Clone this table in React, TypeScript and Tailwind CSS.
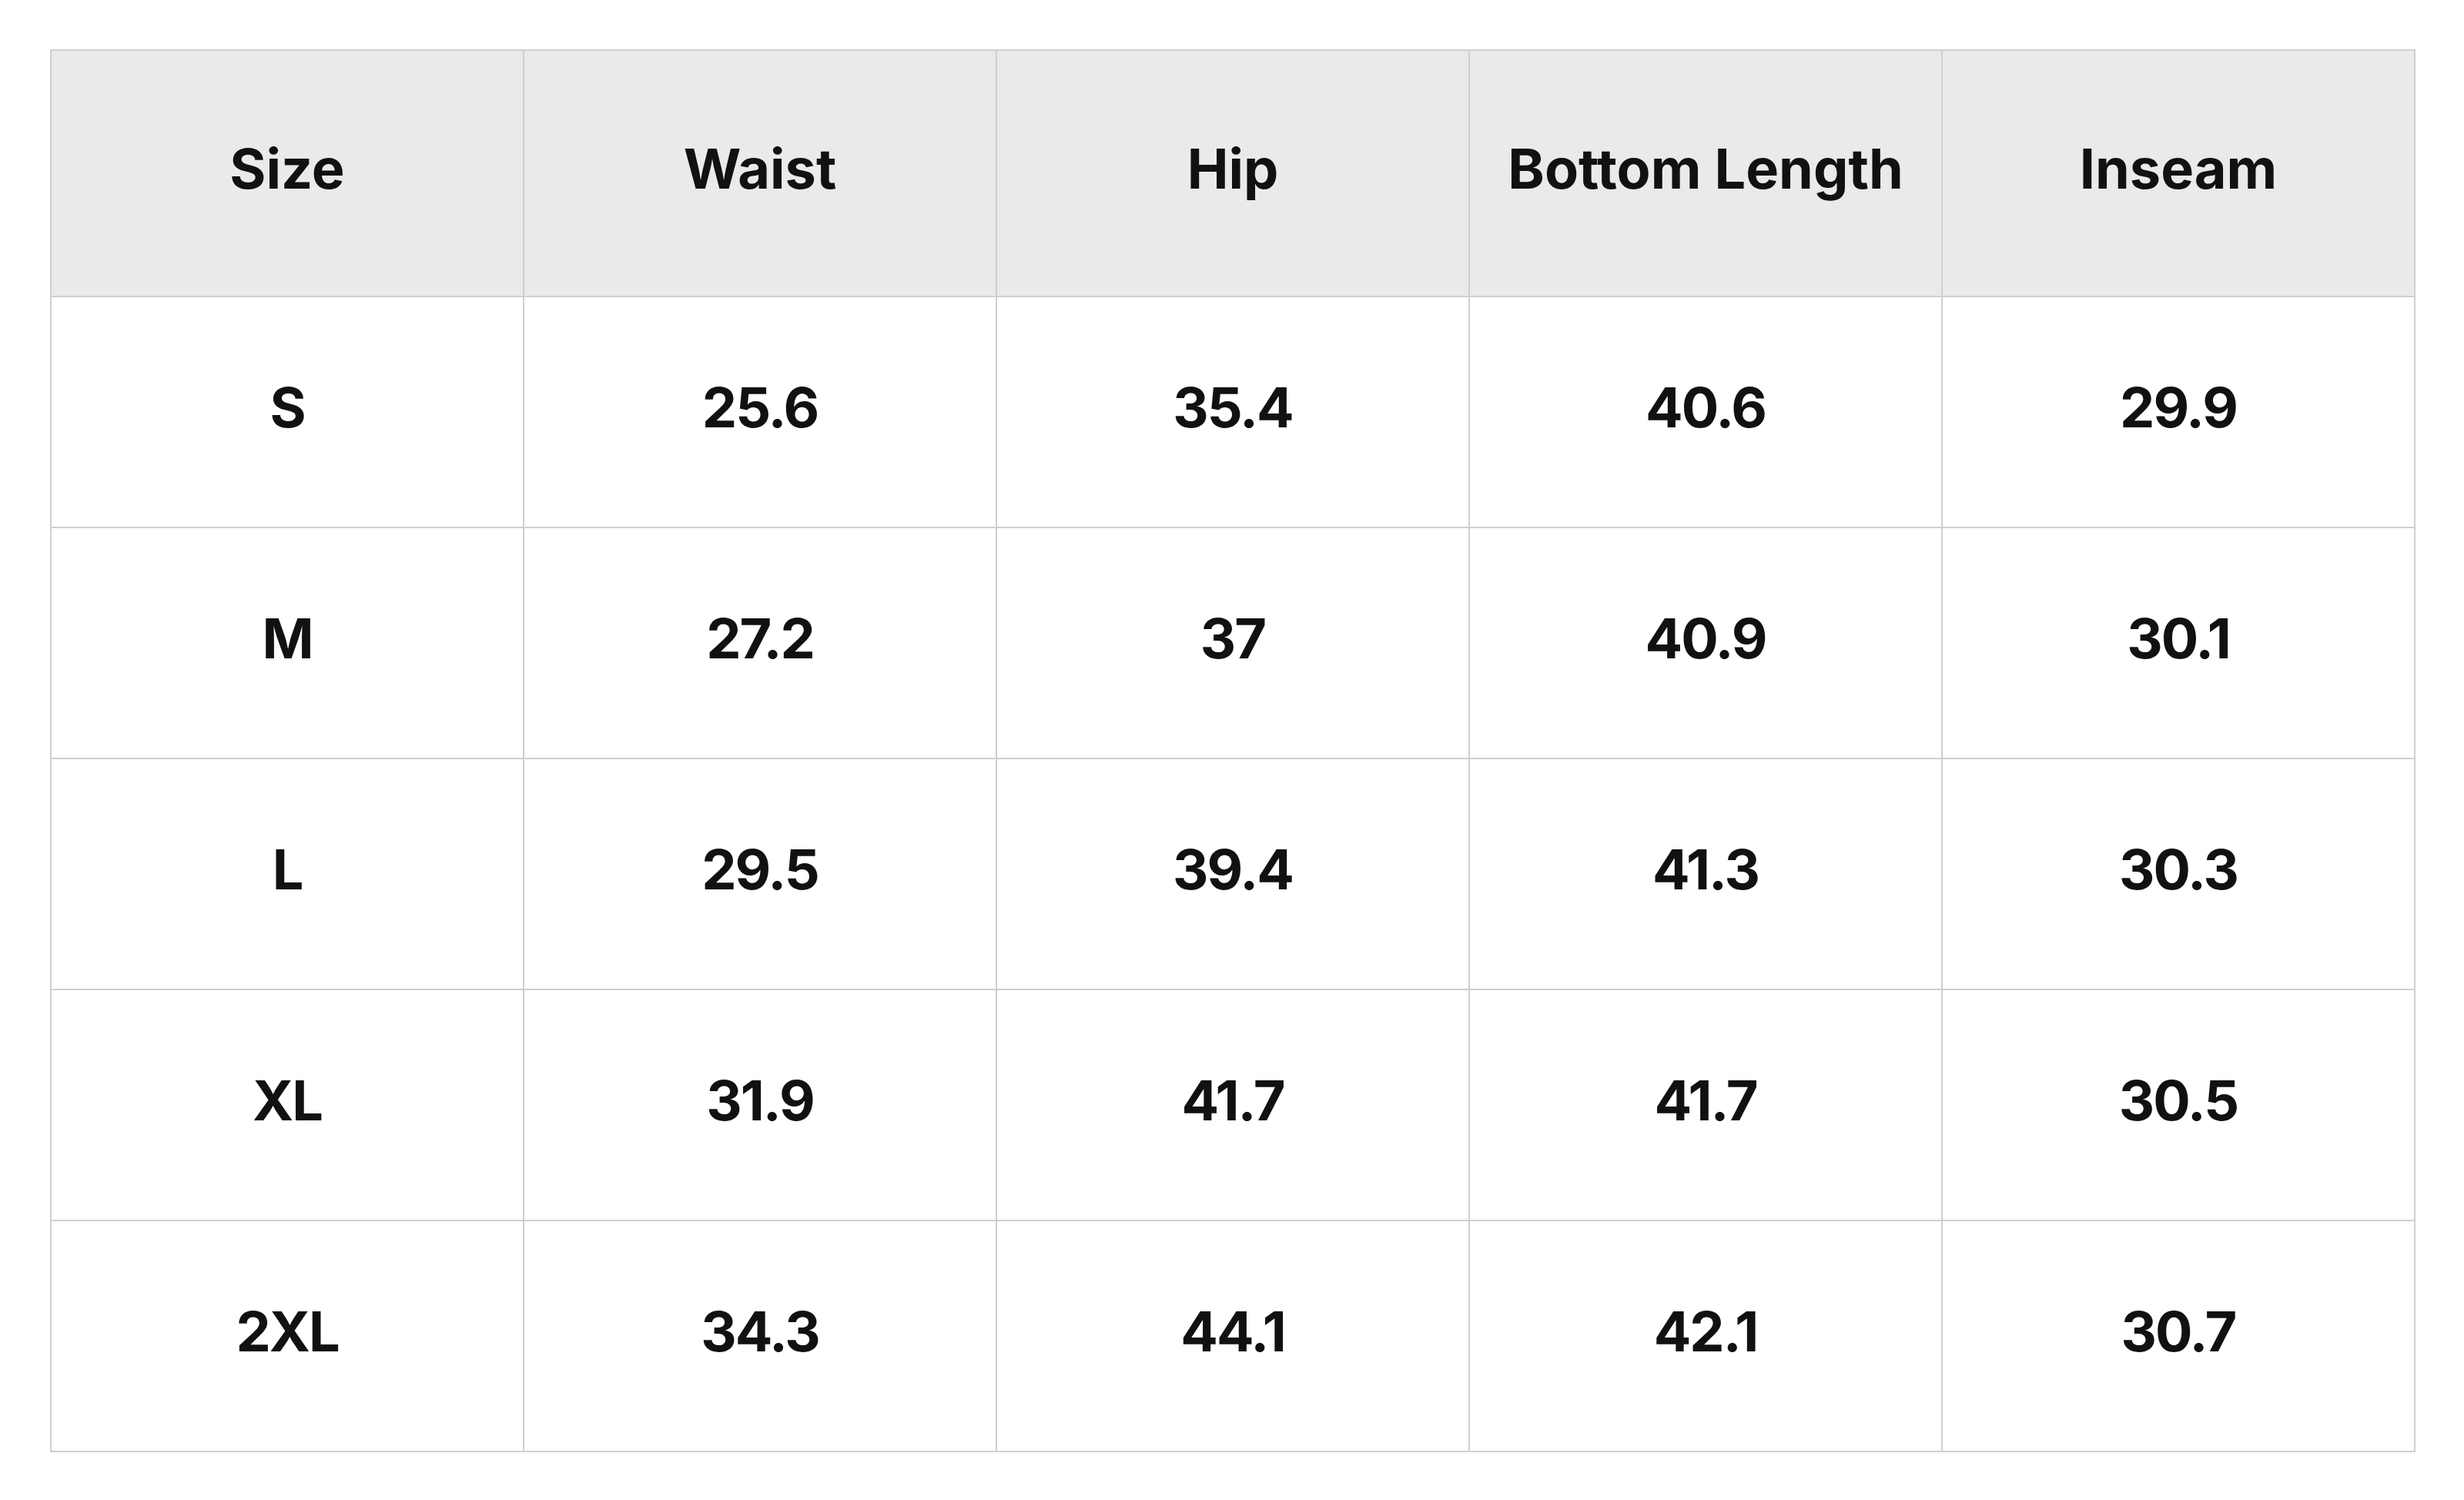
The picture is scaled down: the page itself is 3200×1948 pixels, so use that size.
const headers = ['Size', 'Waist', 'Hip', 'Bottom Length', 'Inseam'];

const rows = [
  ['S', '25.6', '35.4', '40.6', '29.9'],
  ['M', '27.2', '37', '40.9', '30.1'],
  ['L', '29.5', '39.4', '41.3', '30.3'],
  ['XL', '31.9', '41.7', '41.7', '30.5'],
  ['2XL', '34.3', '44.1', '42.1', '30.7'],
];

export default function App() {
  return (
    <main className="min-h-screen bg-white pt-[64px] pl-[65px] font-['Inter',sans-serif] text-[#111111]">
      <table className="w-[3072px] table-fixed border-collapse border-2 border-[#cfcfcf]">
        <thead>
          <tr className="bg-[#eaeaea]">
            {headers.map((h) => (
              <th
                key={h}
                className="h-[320px] border-2 border-[#cfcfcf] pb-[12px] text-center text-[72px] font-bold"
              >
                {h}
              </th>
            ))}
          </tr>
        </thead>
        <tbody>
          {rows.map((row) => (
            <tr key={row[0]}>
              {row.map((cell, i) => (
                <td
                  key={i}
                  className="h-[300px] border-2 border-[#cfcfcf] pb-[12px] text-center text-[72px] font-bold tracking-[-2px]"
                >
                  {cell}
                </td>
              ))}
            </tr>
          ))}
        </tbody>
      </table>
    </main>
  );
}
